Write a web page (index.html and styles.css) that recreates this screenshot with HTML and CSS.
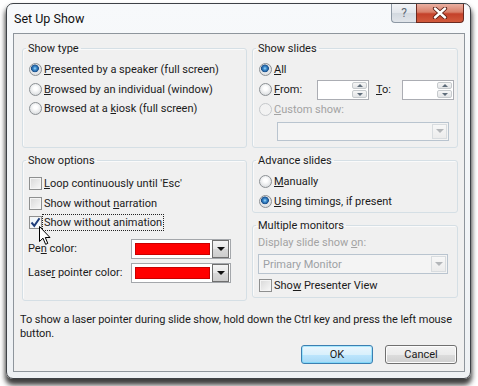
FILE: index.html
```html
<!DOCTYPE html>
<html lang="en">
<head>
  <meta charset="UTF-8" />
  <title>Set Up Show</title>
  <link rel="stylesheet" href="styles.css">
</head>
<body>

<div class="window">
  <div class="titlebar">
    <span class="title">Set Up Show</span>
    <div class="caption">
      <div class="cap-btn help">?</div>
      <div class="cap-btn close">
        <svg width="16" height="12" viewBox="0 0 16 12">
          <path d="M3 1.5 L13 10.5 M13 1.5 L3 10.5" stroke="#5a1c12" stroke-width="4.2" stroke-linecap="round"/>
          <path d="M3 1.5 L13 10.5 M13 1.5 L3 10.5" stroke="#fff" stroke-width="2.4" stroke-linecap="round"/>
        </svg>
      </div>
    </div>
  </div>

  <div class="client">
    <div class="columns">
      <div class="col">
        <fieldset class="group show-type">
          <legend>Show type</legend>
          <div class="opt"><span class="radio on"></span><span><u>P</u>resented by a speaker (full screen)</span></div>
          <div class="opt"><span class="radio"></span><span><u>B</u>rowsed by an individual (window)</span></div>
          <div class="opt"><span class="radio"></span><span>Browsed at a <u>k</u>iosk (full screen)</span></div>
        </fieldset>

        <fieldset class="group show-options">
          <legend>Show options</legend>
          <div class="opt"><span class="check"></span><span><u>L</u>oop continuously until 'Esc'</span></div>
          <div class="opt"><span class="check"></span><span>Show without <u>n</u>arration</span></div>
          <div class="opt"><span class="check on">
            <svg width="11" height="11" viewBox="0 0 11 11"><path d="M1.5 5.5 L4.3 8.8 L9.5 1.2" fill="none" stroke="#1f3d7a" stroke-width="2"/></svg>
          </span><span class="focus">Show without animation</span></div>
          <div class="color-row pen">
            <span class="color-label">Pe<u>n</u> color:</span>
            <div class="color-box"><span class="swatch"></span><span class="drop"><i class="arrow"></i></span></div>
          </div>
          <div class="color-row">
            <span class="color-label">Lase<u>r</u> pointer color:</span>
            <div class="color-box"><span class="swatch"></span><span class="drop"><i class="arrow"></i></span></div>
          </div>
        </fieldset>
      </div>

      <div class="col">
        <fieldset class="group show-slides">
          <legend>Show slides</legend>
          <div class="opt"><span class="radio on"></span><span><u>A</u>ll</span></div>
          <div class="opt range">
            <span class="radio"></span><span class="from-label"><u>F</u>rom:</span>
            <div class="spin"><span class="spin-btns"><i class="up"></i><i class="down"></i></span></div>
            <span class="to-label"><u>T</u>o:</span>
            <div class="spin"><span class="spin-btns"><i class="up"></i><i class="down"></i></span></div>
          </div>
          <div class="opt disabled"><span class="radio off"></span><span><u>C</u>ustom show:</span></div>
          <div class="combo custom"><span class="combo-drop"><i class="arrow grey"></i></span></div>
        </fieldset>

        <fieldset class="group advance">
          <legend>Advance slides</legend>
          <div class="opt"><span class="radio"></span><span><u>M</u>anually</span></div>
          <div class="opt"><span class="radio on"></span><span><u>U</u>sing timings, if present</span></div>
        </fieldset>

        <fieldset class="group monitors">
          <legend>Multiple monitors</legend>
          <div class="monitor-label">Display slide show <u>o</u>n:</div>
          <div class="combo monitor"><span class="combo-text">Primary Monitor</span><span class="combo-drop"><i class="arrow grey"></i></span></div>
          <div class="opt"><span class="check"></span><span>Sho<u>w</u> Presenter View</span></div>
        </fieldset>
      </div>
    </div>

    <p class="hint">To show a laser pointer during slide show, hold down the Ctrl key and press the left mouse<br>button.</p>

    <div class="buttons">
      <div class="btn default">OK</div>
      <div class="btn">Cancel</div>
    </div>
  </div>
</div>

<svg class="cursor" width="13" height="20" viewBox="0 0 13 20">
  <path d="M0.5 0.5 L0.5 15.5 L4 12.2 L6.6 18.3 L8.8 17.4 L6.3 11.5 L11 11.5 Z" fill="#fff" stroke="#000" stroke-width="1"/>
</svg>

</body>
</html>
```

FILE: styles.css
```css
* { box-sizing: border-box; }
body {
  margin: 0;
  width: 478px;
  height: 386px;
  background: #fff;
  font-family: Roboto, "Liberation Sans", sans-serif;
  font-size: 11px;
  color: #1b1b1b;
  position: relative;
  overflow: hidden;
}
u { text-decoration: underline; text-underline-offset: 1px; }

/* --- Window frame --- */
.window {
  margin: 3px 0 0 6px;
  width: 465px;
  height: 376px;
  border: 1px solid #3e4247;
  border-radius: 7px;
  background: linear-gradient(#f7f9fb, #eef1f4);
  box-shadow: 0 5px 5px 1px rgba(30, 30, 30, 0.85);
  padding: 0 5px 6px 6px;
  display: flex;
  flex-direction: column;
}
.titlebar {
  height: 29px;
  display: flex;
  align-items: center;
  justify-content: space-between;
  flex-shrink: 0;
}
.title {
  font-size: 12.5px;
  margin-left: 1px;
  color: #111;
}
.caption {
  align-self: flex-start;
  display: flex;
  margin-right: 1px;
}
.cap-btn {
  height: 19px;
  display: flex;
  align-items: center;
  justify-content: center;
}
.help {
  width: 25px;
  border: 1px solid #8d98a4;
  border-top: none;
  border-right: none;
  border-radius: 0 0 0 4px;
  background: linear-gradient(#f2f4f7, #e2e6eb 50%, #d2d8df 50%, #e1e5ea);
  color: #606a75;
  font-size: 12px;
}
.close {
  width: 48px;
  border: 1px solid #6b2a20;
  border-top: none;
  border-radius: 0 0 4px 0;
  background: linear-gradient(#eab0a2, #d9806a 45%, #c4412a 55%, #d25a3c);
}

/* --- Client area --- */
.client {
  flex: 1;
  border: 1px solid #8e959c;
  background: #f0f0f0;
  padding: 7px 7px 0 6px;
  display: flex;
  flex-direction: column;
}
.columns {
  display: grid;
  grid-template-columns: 225px 206px;
  gap: 5px;
  padding-left: 2px;
}
.col {
  display: flex;
  flex-direction: column;
  gap: 5px;
}
.group {
  margin: 0;
  min-width: 0;
  padding: 0 0 0 6px;
  border: 1px solid #d5dfe5;
  border-radius: 3px;
  box-shadow: inset 1px 1px #fafafa;
}
.group legend {
  padding: 0 2px;
  margin-left: -3px;
  line-height: 15px;
}
.show-type { height: 107px; padding-top: 4px; }
.show-options { height: 148px; padding-top: 6px; }
.show-slides { height: 107px; padding-top: 4px; }
.advance { height: 60px; padding-top: 4px; }
.monitors { height: 80px; }

.opt {
  display: flex;
  align-items: center;
  gap: 2px;
  height: 19.5px;
  white-space: nowrap;
}
.disabled { color: #a3a3a3; }

/* radios and checkboxes */
.radio {
  width: 13px;
  height: 13px;
  border-radius: 50%;
  border: 1px solid #8c9094;
  background: radial-gradient(circle at 50% 40%, #ffffff 20%, #e3e5e7 65%, #cdd1d4);
  flex-shrink: 0;
}
.radio.on {
  background: radial-gradient(circle at 45% 40%, #a9daf7 0, #3d8fd2 1.6px, #1b4f8a 3.6px, #e6e8ea 4.2px, #d6d9dc 100%);
}
.radio.off {
  border-color: #c5c8cb;
  background: #f2f2f2;
}
.check {
  width: 13px;
  height: 13px;
  border: 1px solid #8e8f8f;
  background: linear-gradient(135deg, #d8d8d8, #f9f9f9);
  box-shadow: inset 0 0 0 1px #f4f4f4;
  flex-shrink: 0;
  display: flex;
  align-items: center;
  justify-content: center;
}
.check.on { background: linear-gradient(135deg, #e9f3fb, #ffffff); }
.focus {
  outline: 1px dotted #222;
  outline-offset: 0;
  padding: 0 1px;
  margin-left: -1px;
  line-height: 15px;
}

/* colour pickers */
.color-row {
  display: flex;
  align-items: center;
  margin-left: -1px;
  margin-top: 4px;
}
.color-row.pen { margin-top: 6px; }
.color-label { width: 103px; }
.color-box {
  width: 100px;
  height: 20px;
  border: 1px solid #a4a7ab;
  background: #fff;
  display: flex;
  align-items: center;
  padding: 0 1px 0 3px;
  gap: 2px;
}
.swatch {
  width: 76px;
  height: 12px;
  background: #ff0000;
  border: 1px solid #c80000;
}
.drop {
  width: 17px;
  height: 18px;
  border: 1px solid #6f6f6f;
  background: linear-gradient(#f4f4f4, #e6e6e6 50%, #d8d8d8 50%, #cdcdcd);
  display: flex;
  align-items: center;
  justify-content: center;
}
.arrow {
  width: 0;
  height: 0;
  border-left: 4px solid transparent;
  border-right: 4px solid transparent;
  border-top: 4px solid #111;
}
.arrow.grey { border-top-color: #b3b6b9; }

/* spin boxes */
.from-label { width: 41px; }
.to-label { width: 24px; margin-left: 5px; }
.spin {
  width: 52px;
  height: 20px;
  border: 1px solid #abadb3;
  background: #fff;
  display: flex;
  justify-content: flex-end;
  padding: 1px;
}
.spin-btns {
  width: 15px;
  display: flex;
  flex-direction: column;
  gap: 1px;
}
.spin-btns i {
  flex: 1;
  border: 1px solid #c6cacd;
  border-radius: 2px;
  background: linear-gradient(#f6f6f6, #e2e4e6);
  display: flex;
  align-items: center;
  justify-content: center;
}
.spin-btns i::after {
  content: "";
  border-left: 3px solid transparent;
  border-right: 3px solid transparent;
}
.spin-btns .up::after { border-bottom: 3px solid #5f6d7a; }
.spin-btns .down::after { border-top: 3px solid #5f6d7a; }
.range { height: 20.5px; }

/* combo boxes */
.combo {
  height: 19px;
  border: 1px solid #b9c4cf;
  background: #f4f4f4;
  display: flex;
  align-items: center;
  justify-content: space-between;
  padding: 1px;
}
.combo.custom {
  width: 172px;
  margin: 2px 0 0 18px;
}
.combo.monitor {
  width: 190px;
  height: 20px;
  margin: 1px 0 0 -1px;
}
.combo-text {
  color: #9da1a5;
  padding-left: 3px;
}
.combo-drop {
  margin-left: auto;
  width: 15px;
  height: 100%;
  border: 1px solid #d8dcdf;
  background: linear-gradient(#f7f7f7, #ececec);
  display: flex;
  align-items: center;
  justify-content: center;
}
.monitor-label {
  color: #a3a3a3;
  margin-left: -1px;
  height: 20px;
  line-height: 20px;
}
.monitors .opt { margin-top: 2px; }

/* footer */
.hint {
  margin: 12px 0 0;
  line-height: 14px;
  letter-spacing: -0.07px;
  white-space: nowrap;
}
.buttons {
  margin-top: 4px;
  display: flex;
  justify-content: flex-end;
  gap: 12px;
}
.btn {
  width: 72px;
  height: 19px;
  border: 1px solid #707070;
  border-radius: 3px;
  background: linear-gradient(#f3f3f3, #ebebeb 50%, #dddddd 50%, #cfcfcf);
  box-shadow: inset 0 0 0 1px #fcfcfc;
  display: flex;
  align-items: center;
  justify-content: center;
}
.btn.default {
  border-color: #3c7fb1;
  background: linear-gradient(#eaf6fd, #d9f0fc 50%, #bee6fd 50%, #a7d9f5);
  box-shadow: inset 0 0 0 1px #48d5fd66;
}

.cursor {
  position: absolute;
  left: 39px;
  top: 226px;
}
```
